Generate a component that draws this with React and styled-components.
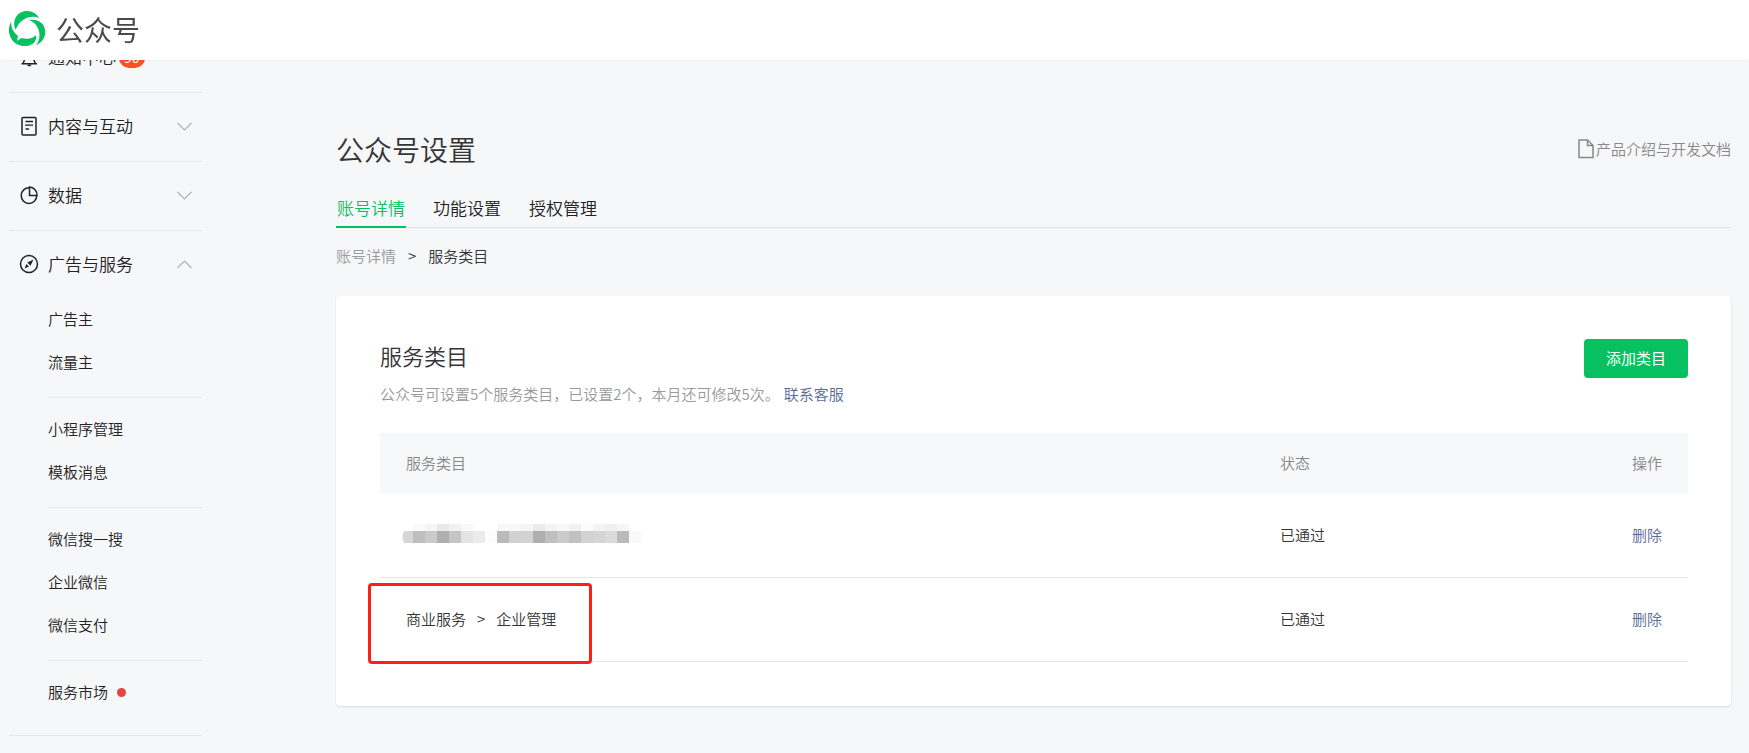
import React from "react";
import styled, { createGlobalStyle, css } from "styled-components";

const GlobalStyle = createGlobalStyle`
  * { box-sizing: border-box; }
  body {
    margin: 0;
    background: #f6f7f9;
    color: #353535;
    font-family: "Noto Sans CJK SC", "Liberation Sans", sans-serif;
    font-weight: 350;
    font-size: 15px;
    line-height: 24px;
  }
  a { text-decoration: none; color: inherit; }
  h1, h2, p, ul { margin: 0; padding: 0; font-weight: inherit; }
  ul { list-style: none; }
  button { font: inherit; cursor: pointer; }
`;

const Header = styled.header`
  position: fixed;
  top: 0;
  left: 0;
  right: 0;
  z-index: 10;
  height: 60px;
  padding: 0 9px;
  display: flex;
  align-items: center;
  background: #fff;
  overflow: hidden;
  box-shadow: 0 1px 2px rgba(0, 0, 0, 0.03);
`;

const Brand = styled.a`
  display: flex;
  align-items: center;
  gap: 10px;
  padding-bottom: 2px;
  font-size: 28px;
  font-weight: 400;
  line-height: 28px;
  color: #4a4a4a;
`;

const Page = styled.div`
  display: flex;
  align-items: flex-start;
`;

const Sidebar = styled.nav`
  flex: none;
  width: 202px;
  padding: 24px 0 16px 9px;
`;

const Section = styled.div`
  border-bottom: 1px solid #e4e6e8;
  padding-bottom: ${(p) => (p.$open ? "20px" : "0")};
`;

const SectionButton = styled.button`
  display: flex;
  align-items: center;
  width: 100%;
  height: 68px;
  padding: 0 10px 2px;
  border: 0;
  background: none;
  color: #222;
  font-size: 17px;
  text-align: left;
  svg:first-child { margin-right: 9px; }
`;

const Arrow = styled.svg`
  margin-left: auto;
`;

const Badge = styled.span`
  padding: 0 5px;
  border-radius: 10px;
  background: #fa5127;
  color: #fff;
  font-size: 14px;
  font-weight: 400;
  line-height: 22px;
  margin-left: 3px;
  min-width: 25px;
  text-align: center;
`;

const SubGroup = styled.ul`
  margin-left: 39px;
  & + & {
    margin-top: 12px;
    padding-top: 11px;
    border-top: 1px solid #e4e6e8;
  }
`;

const SubLink = styled.a`
  display: flex;
  align-items: center;
  gap: 9px;
  height: 43px;
  padding-bottom: 3px;
  color: #222;
`;

const Dot = styled.i`
  width: 9px;
  height: 9px;
  border-radius: 50%;
  background: #e64340;
`;

const Main = styled.main`
  flex: 1;
  min-width: 0;
  margin: 129px 18px 40px 134px;
`;

const TitleBar = styled.div`
  display: flex;
  justify-content: space-between;
  align-items: center;
`;

const Title = styled.h1`
  font-size: 28px;
  line-height: 40px;
`;

const DocLink = styled.a`
  display: flex;
  align-items: center;
  gap: 2px;
  color: #888;
`;

const Tabs = styled.div`
  display: flex;
  gap: 26px;
  margin-top: 20px;
  border-bottom: 1px solid #e0e1e3;
`;

const Tab = styled.a`
  padding: 0 1px 2px;
  margin-bottom: -1px;
  height: 39px;
  font-size: 17px;
  line-height: 38px;
  color: #222;
  ${(p) =>
    p.$active &&
    css`
      color: #07c160;
      border-bottom: 2px solid #07c160;
    `}
`;

const Crumbs = styled.nav`
  display: flex;
  gap: 12px;
  margin-top: 16px;
  a { color: #9a9a9a; }
`;

const Card = styled.section`
  margin-top: 28px;
  padding: 43px 43px 44px 44px;
  background: #fff;
  border-radius: 4px;
  box-shadow: 0 1px 2px rgba(0, 0, 0, 0.12);
`;

const CardHead = styled.div`
  display: flex;
  justify-content: space-between;
  align-items: flex-start;
`;

const CardTitle = styled.h2`
  font-size: 22px;
  line-height: 32px;
`;

const Hint = styled.p`
  margin-top: 11px;
  color: #9a9a9a;
`;

const TextLink = styled.a`
  color: #576b95;
  ${Hint} & { margin-left: 4px; }
`;

const AddButton = styled.button`
  height: 39px;
  padding: 0 22px 2px;
  border: 0;
  border-radius: 4px;
  background: #07c160;
  color: #fff;
  font-weight: 400;
`;

const Table = styled.table`
  width: 100%;
  margin-top: 27px;
  border-collapse: separate;
  border-spacing: 0;
  text-align: left;
  th, td { padding: 0 26px 2px; }
  th {
    height: 61px;
    background: #f6f8f9;
    color: #888;
    font-weight: inherit;
  }
  td {
    position: relative;
    height: 84px;
    border-bottom: 1px solid #e4e6e8;
  }
  th:nth-child(2) { width: 314px; }
  th:last-child { width: 120px; }
  th:last-child, td:last-child { text-align: right; }
`;

const Path = styled.span`
  display: flex;
  gap: 11px;
`;

const Highlight = styled.span`
  position: absolute;
  top: 5px;
  bottom: -3px;
  left: -12px;
  width: 224px;
  border: 3px solid #ff2012;
  border-radius: 4px;
`;

const Masked = styled.svg`
  display: block;
  margin-left: -5px;
`;

const Logo = () => (
  <svg width="37" height="36" viewBox="0 0 37 36" fill="#07c160" aria-hidden="true">
    <path d="M6.500 18.500C2.500 9 8.500 0 18 0c5.500 0 10 3 12 7-5-2-11-1.500-16 2-5 3.500-5 6-7.500 9.500z" />
    <path d="M20 9.200C29 7 36.300 13 36.300 21c0 6-4 11-9.300 13.300 4-5 4.500-12 1.800-17.300-1.800-4-5-7-8.800-7.800z" />
    <path d="M2.200 10.500C-2 18-.3 27 6 32c6 4.500 15 4 19.500-.8 1.500-2 1.800-4.400 1.500-6.900-4 3.700-9.500 4.200-14.300 2.700L8 29.800l1-4.800C4 21 2 16 2.200 10.500z" />
  </svg>
);

const iconProps = {
  width: 20,
  height: 20,
  viewBox: "0 0 20 20",
  fill: "none",
  stroke: "#222",
  strokeWidth: 1.5,
  "aria-hidden": true,
};

const BellIcon = () => (
  <svg {...iconProps}>
    <path d="M2.500 16.800h15.500M4 16.500c1.500-2 1.500-3 1.500-6 0-4 2-7 4.700-7s4.700 3 4.700 7c0 3 0 4 1.500 6" />
    <path d="M8 17.500h4.500l-1 1.800h-2.500z" fill="#222" stroke="none" />
  </svg>
);
const DocIcon = () => (
  <svg {...iconProps}>
    <rect x="3" y="1.500" width="14" height="17.500" rx="1" />
    <path d="M6.500 5.500h7.500M6 9.200h8M6.500 13h3.500" strokeWidth="1.300" />
  </svg>
);
const PieIcon = () => (
  <svg {...iconProps}>
    <path d="M10.300 2.800a7.800 7.800 0 1 0 7.500 8" />
    <path d="M10.500 2v8.500H18A7.800 7.800 0 0 0 10.500 2z" />
  </svg>
);
const CompassIcon = () => (
  <svg {...iconProps}>
    <circle cx="10" cy="10" r="8.500" />
    <path d="M14.500 5.500l-3 6.200-3.200-3.200zM5.500 14.500l2-4.500 2.500 2.500z" fill="#222" stroke="none" />
  </svg>
);
const FileIcon = () => (
  <svg width="16" height="20" viewBox="0 0 16 20" fill="none" stroke="#888" strokeWidth="1.5" aria-hidden="true">
    <path d="M1 1h8.500L15 6.500V18.500H1zM9.500 1v5.500H15" />
  </svg>
);
const Chevron = ({ up }) => (
  <Arrow width="15" height="9" viewBox="0 0 15 9" fill="none" stroke="#b0b1b3" strokeWidth="1.200" aria-hidden="true">
    <path d={up ? "M.5 8l7-7 7 7" : "M.5 1l7 7 7-7"} />
  </Arrow>
);

const TOP = ["", "#fafafa", "#f5f5f5", "#e9e9e9", "#f1f1f1", "#f9f9f9", "", "", "#f8f8f8", "#f8f8f8", "#f5f5f5", "#ebebeb", "#f3f3f3", "#f7f7f7", "#f1f1f1", "#fcfcfc", "#f3f3f3", "#efefef", "#f6f6f6", ""];
const BOTTOM = ["#d6d6d6", "#bfbfbf", "#cacaca", "#afafaf", "#c5c5c5", "#e4e4e4", "#ebebeb", "#fcfcfc", "#bababa", "#d1d1d1", "#d2d2d2", "#afafaf", "#c0c0c0", "#cbcbcb", "#c1c1c1", "#d2d2d2", "#d5d5d5", "#dbdbdb", "#bababa", "#f9f9f9"];

const Mosaic = () => (
  <Masked width="240" height="24" viewBox="0 0 240 24" role="img" aria-label="已隐藏">
    {TOP.map((c, i) => c && <rect key={i} x={i * 12} y="1" width="12" height="8" fill={c} />)}
    {BOTTOM.map((c, i) =>
      i === 0
        ? <path key={i} d="M12 8H3Q0 14 3 20h9z" fill={c} />
        : <rect key={i} x={i * 12} y="8" width="12" height="12" fill={c} />
    )}
  </Masked>
);

const SECTIONS = [
  { name: "通知中心", Icon: BellIcon, badge: "90" },
  { name: "内容与互动", Icon: DocIcon },
  { name: "数据", Icon: PieIcon },
  {
    name: "广告与服务",
    Icon: CompassIcon,
    groups: [["广告主", "流量主"], ["小程序管理", "模板消息"], ["微信搜一搜", "企业微信", "微信支付"], ["服务市场"]],
  },
];

export default function App() {
  return (
    <>
      <GlobalStyle />
      <Header>
        <Brand href="#"><Logo />公众号</Brand>
      </Header>
      <Page>
        <Sidebar>
          {SECTIONS.map(({ name, Icon, badge, groups }) => (
            <Section key={name} $open={!!groups}>
              <SectionButton type="button">
                <Icon />
                {name}
                {badge ? <Badge>{badge}</Badge> : <Chevron up={!!groups} />}
              </SectionButton>
              {groups?.map((items) => (
                <SubGroup key={items[0]}>
                  {items.map((item) => (
                    <li key={item}>
                      <SubLink href="#">{item}{item === "服务市场" && <Dot />}</SubLink>
                    </li>
                  ))}
                </SubGroup>
              ))}
            </Section>
          ))}
        </Sidebar>
        <Main>
          <TitleBar>
            <Title>公众号设置</Title>
            <DocLink href="#"><FileIcon />产品介绍与开发文档</DocLink>
          </TitleBar>
          <Tabs>
            <Tab href="#" $active>账号详情</Tab>
            <Tab href="#">功能设置</Tab>
            <Tab href="#">授权管理</Tab>
          </Tabs>
          <Crumbs>
            <a href="#">账号详情</a>
            <span>&gt;</span>
            <span>服务类目</span>
          </Crumbs>
          <Card>
            <CardHead>
              <div>
                <CardTitle>服务类目</CardTitle>
                <Hint>
                  公众号可设置5个服务类目，已设置2个，本月还可修改5次。<TextLink href="#">联系客服</TextLink>
                </Hint>
              </div>
              <AddButton type="button">添加类目</AddButton>
            </CardHead>
            <Table>
              <thead>
                <tr><th>服务类目</th><th>状态</th><th>操作</th></tr>
              </thead>
              <tbody>
                <tr>
                  <td><Mosaic /></td>
                  <td>已通过</td>
                  <td><TextLink href="#">删除</TextLink></td>
                </tr>
                <tr>
                  <td>
                    <Path><span>商业服务</span><span>&gt;</span><span>企业管理</span></Path>
                    <Highlight />
                  </td>
                  <td>已通过</td>
                  <td><TextLink href="#">删除</TextLink></td>
                </tr>
              </tbody>
            </Table>
          </Card>
        </Main>
      </Page>
    </>
  );
}
